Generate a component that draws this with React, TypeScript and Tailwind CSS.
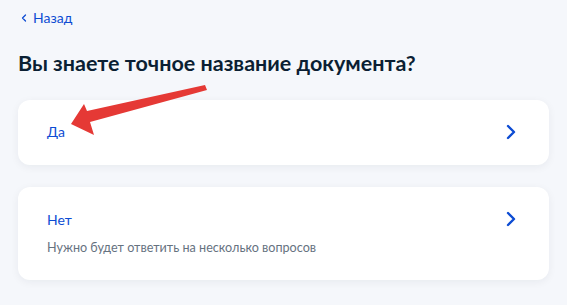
import { ChevronRight, ChevronLeft } from 'lucide-react'

function OptionCard({ title, hint }: { title: string; hint?: string }) {
  return (
    <button className="flex w-full items-start justify-between rounded-[12px] bg-white pl-[29px] pr-[26px] text-left shadow-[0_2px_8px_rgba(11,31,51,0.06)]">
      <div className={hint ? 'pb-[24px] pt-[23px]' : 'pb-[23px] pt-[22px]'}>
        <div className="text-[14px] leading-[20px] text-[#0d4cd3]">{title}</div>
        {hint && <div className="mt-[10px] text-[12.6px] leading-[16px] text-[#66727f]">{hint}</div>}
      </div>
      <ChevronRight className="mt-[20px] h-[24px] w-[24px] text-[#0d4cd3]" strokeWidth={2.4} />
    </button>
  )
}

export default function App() {
  return (
    <div className="relative h-[305px] w-[567px] overflow-hidden bg-[#f5f7fb] px-[18px] pt-[8px] font-['Lato','Noto_Sans',sans-serif] text-[#0b1f33]">
      <a className="flex items-center gap-[3px] text-[14px] leading-[20px] text-[#0d4cd3]">
        <ChevronLeft className="h-[12px] w-[12px]" strokeWidth={2.5} />
        Назад
      </a>
      <h1 className="mt-[22px] text-[21.5px] font-bold leading-[26px]">Вы знаете точное название документа?</h1>
      <div className="mt-[24px] flex w-[531px] flex-col gap-[22px]">
        <OptionCard title="Да" />
        <OptionCard title="Нет" hint="Нужно будет ответить на несколько вопросов" />
      </div>
      {/* red annotation arrow */}
      <svg className="pointer-events-none absolute left-0 top-0" width="567" height="305" viewBox="0 0 567 305">
        <polygon points="71,124 84,104 87,111 205,85 207,90 90,122 94,135" fill="#e53935" />
      </svg>
    </div>
  )
}
